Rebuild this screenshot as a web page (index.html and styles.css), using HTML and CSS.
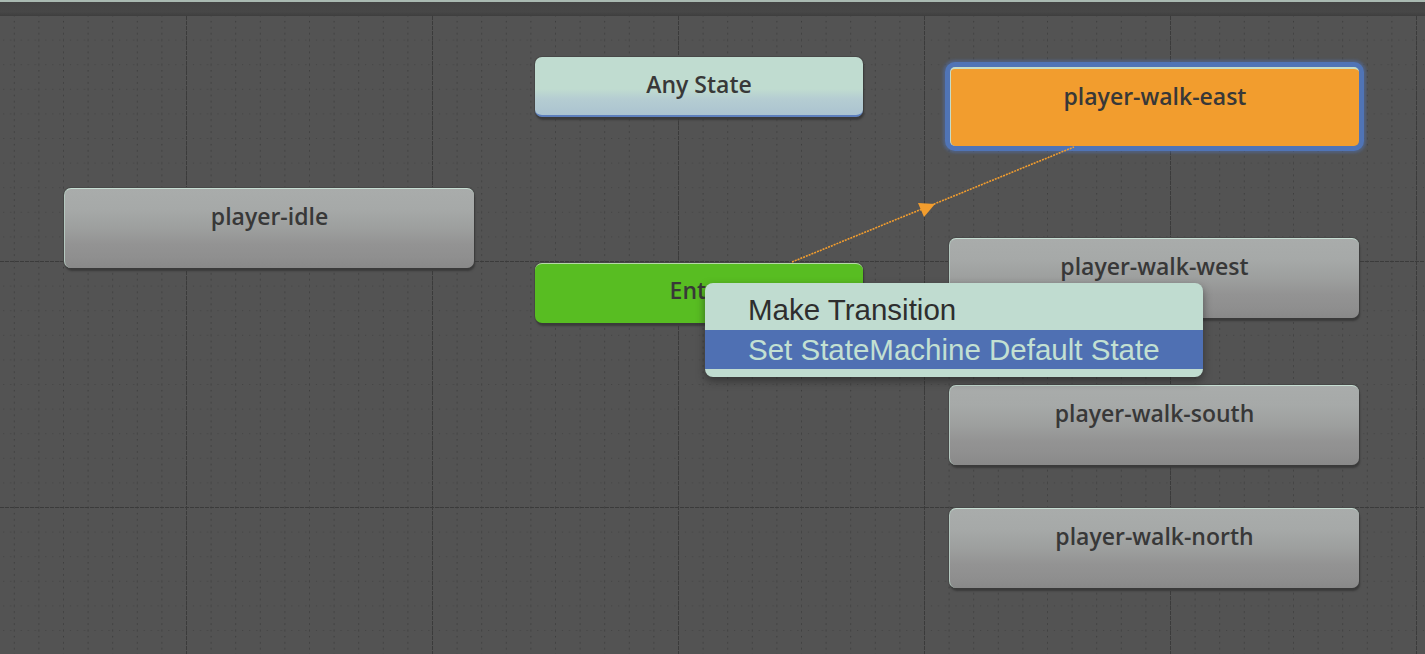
FILE: index.html
```html
<!DOCTYPE html>
<html>
<head>
<meta charset="utf-8">
<link rel="stylesheet" href="styles.css">
</head>
<body>
<div class="window">
  <div class="topbar"></div>
  <div class="canvas">
    <svg class="grid" width="1425" height="638" viewBox="0 0 1425 638">
      <defs>
        <pattern id="minor" patternUnits="userSpaceOnUse" x="13.8" y="23.6" width="24.6" height="24.6">
          <line x1="0.5" y1="0" x2="0.5" y2="24.6" class="minor-v"/>
          <line x1="0" y1="0.5" x2="24.6" y2="0.5" class="minor-h"/>
        </pattern>
      </defs>
      <rect x="0" y="0" width="1425" height="638" fill="url(#minor)"/>
      <g class="major-line">
        <line x1="186.5" y1="0" x2="186.5" y2="638"/>
        <line x1="432.5" y1="0" x2="432.5" y2="638"/>
        <line x1="678.5" y1="0" x2="678.5" y2="638"/>
        <line x1="924.5" y1="0" x2="924.5" y2="638"/>
        <line x1="1170.5" y1="0" x2="1170.5" y2="638"/>
        <line x1="1416.5" y1="0" x2="1416.5" y2="638"/>
        <line x1="0" y1="245.5" x2="1425" y2="245.5"/>
        <line x1="0" y1="491.5" x2="1425" y2="491.5"/>
      </g>
    </svg>

    <div class="node gray idle">player-idle</div>
    <div class="node any">Any State</div>
    <div class="node entry">Entry</div>
    <div class="node orange east">player-walk-east</div>
    <div class="node gray west">player-walk-west</div>
    <div class="node gray south">player-walk-south</div>
    <div class="node gray north">player-walk-north</div>

    <svg class="links" width="1425" height="638" viewBox="0 0 1425 638">
      <line x1="792" y1="246" x2="1074" y2="131" class="link"/>
      <polygon points="935,188 924,201 918,187" class="arrow"/>
    </svg>

    <div class="menu">
      <div class="menu-item">Make Transition</div>
      <div class="menu-item selected">Set StateMachine Default State</div>
    </div>
  </div>
</div>
</body>
</html>
```

FILE: styles.css
```css
html, body {
  margin: 0;
  padding: 0;
  height: 100%;
  overflow: hidden;
  background: #535353;
}

.window {
  display: flex;
  flex-direction: column;
  width: 1425px;
  height: 654px;
}

.topbar {
  height: 14px;
  flex: none;
  border-top: 2px solid #a9b9b1;
  background: linear-gradient(#444444, #474747 70%, #3e3e3e);
}

.canvas {
  position: relative;
  flex: 1;
  background: #535353;
  overflow: hidden;
}

.grid, .links {
  position: absolute;
  left: 0;
  top: 0;
}

.minor-v {
  stroke: #3d3d3d;
  stroke-width: 1;
  stroke-dasharray: 1.5 4.5;
}

.minor-h {
  stroke: #424242;
  stroke-width: 1;
  stroke-dasharray: 1 6;
}

.major-line line {
  stroke: #3b3b3b;
  stroke-width: 1;
  stroke-dasharray: 4 1;
}

.link {
  stroke: #f29d2e;
  stroke-width: 1.6;
  stroke-dasharray: 2 1;
}

.arrow {
  fill: #f29d2e;
}

.node {
  position: absolute;
  box-sizing: border-box;
  text-align: center;
  font-family: "Open Sans", "DejaVu Sans", sans-serif;
  font-weight: 600;
  font-size: 23px;
  line-height: 24px;
  color: #383838;
  border-radius: 7px;
  padding-top: 15px;
  box-shadow: 1px 3px 2px #3a3a3a, 0 0 0 1px #484848;
}

.gray {
  width: 410px;
  height: 80px;
  background: linear-gradient(#a9acab 0%, #a6a9a8 25%, #9d9f9e 50%, #939393 70%, #8f8f8f 86%, #898989 100%);
  border-top: 1px solid #c6ddd2;
  border-left: 1px solid #b4c8bf;
}

.idle { left: 64px; top: 172px; }
.west { left: 949px; top: 222px; }
.south { left: 949px; top: 369px; }
.north { left: 949px; top: 492px; }

.any {
  left: 535px;
  top: 41px;
  width: 328px;
  height: 60px;
  padding-top: 15px;
  background: linear-gradient(#c0dcd0 0%, #c0dcd0 55%, #b5cdd2 72%, #abc3d0 100%);
  border-bottom: 2px solid #5d7fbd;
}

.entry {
  left: 535px;
  top: 247px;
  width: 328px;
  height: 60px;
  padding-top: 14px;
  background: #58bd22;
  border-top: 1px solid #b6d9a8;
}

.orange {
  left: 950px;
  top: 51px;
  width: 409px;
  height: 79px;
  padding-top: 15px;
  background: #f29d2e;
  border-top: 2px solid #c6dcc6;
  border-left: 1px solid #c6dcc6;
  border-radius: 5px;
  box-shadow: 0 0 0 5px #5074b6, 0 0 3px 7px rgba(80, 116, 182, 0.45);
}

.menu {
  position: absolute;
  left: 705px;
  top: 267px;
  width: 498px;
  height: 94px;
  box-sizing: border-box;
  padding-top: 7px;
  background: #c0dcd0;
  border-radius: 8px;
  box-shadow: 0 4px 8px rgba(30, 30, 30, 0.55);
  font-family: "Liberation Sans", Arial, sans-serif;
  font-size: 29.5px;
  color: #2e2e2e;
}

.menu-item {
  height: 40px;
  line-height: 40px;
  padding-left: 43px;
  white-space: nowrap;
}

.menu-item.selected {
  height: 39px;
  background: #4f70b3;
  color: #c3e0d2;
}
```
